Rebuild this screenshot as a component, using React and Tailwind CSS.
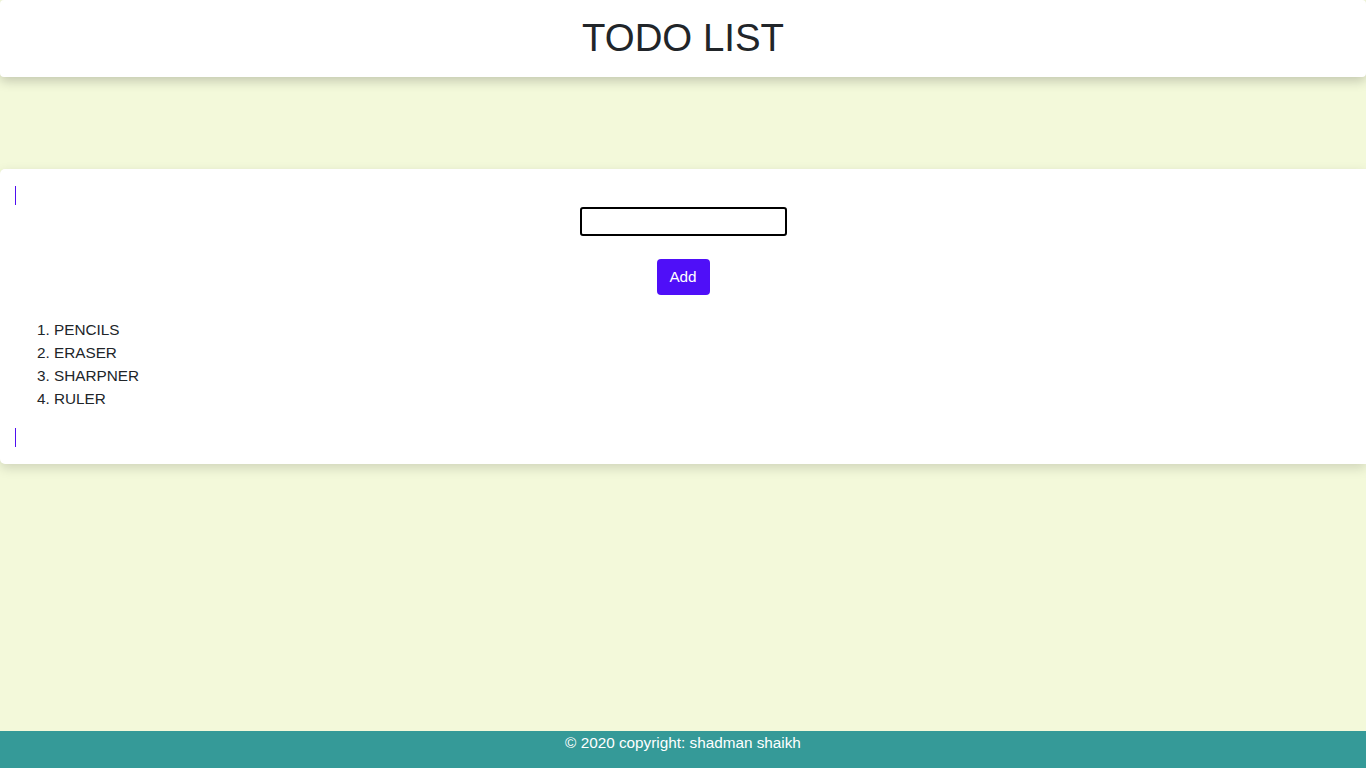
export default function App() {
  const items = ["PENCILS", "ERASER", "SHARPNER", "RULER"];
  return (
    <div className="min-h-screen flex flex-col bg-[#f3f9da] font-['Liberation_Sans',Arial,sans-serif] text-[#212529]">
      <header className="h-[77px] bg-white rounded-[4px] shadow-[0_4px_12px_rgba(0,0,0,0.2)] flex items-center justify-center relative z-10">
        <h1 className="text-[38.4px] leading-none font-normal">TODO LIST</h1>
      </header>
      <div className="h-[92px]" />
      <main className="bg-white rounded-l-[5px] shadow-[0_4px_12px_rgba(0,0,0,0.15)] pt-[17px] pb-[17px] flex flex-col">
        <div className="ml-[15px] w-px h-[19px] bg-[#4f0ff0]" />
        <div className="flex justify-center mt-[2px]">
          <input type="text" className="w-[207px] h-[29px] border-2 border-black rounded-[3px] bg-white outline-none" />
        </div>
        <div className="flex justify-center mt-[23px]">
          <button className="w-[53px] h-[36px] bg-[#4f0ff8] text-white text-[15.3px] rounded-[4px]">Add</button>
        </div>
        <ol className="mt-[23px] pl-[37px] text-[15.3px] leading-[23px]">
          {items.map((t, i) => (
            <li key={t}>{i + 1}. {t}</li>
          ))}
        </ol>
        <div className="ml-[15px] mt-[18px] w-px h-[19px] bg-[#4f0ff0]" />
      </main>
      <div className="flex-1" />
      <footer className="h-[37px] bg-[#359a98] text-white text-[15.3px] text-center leading-[23px]">
        © 2020 copyright: shadman shaikh
      </footer>
    </div>
  );
}
